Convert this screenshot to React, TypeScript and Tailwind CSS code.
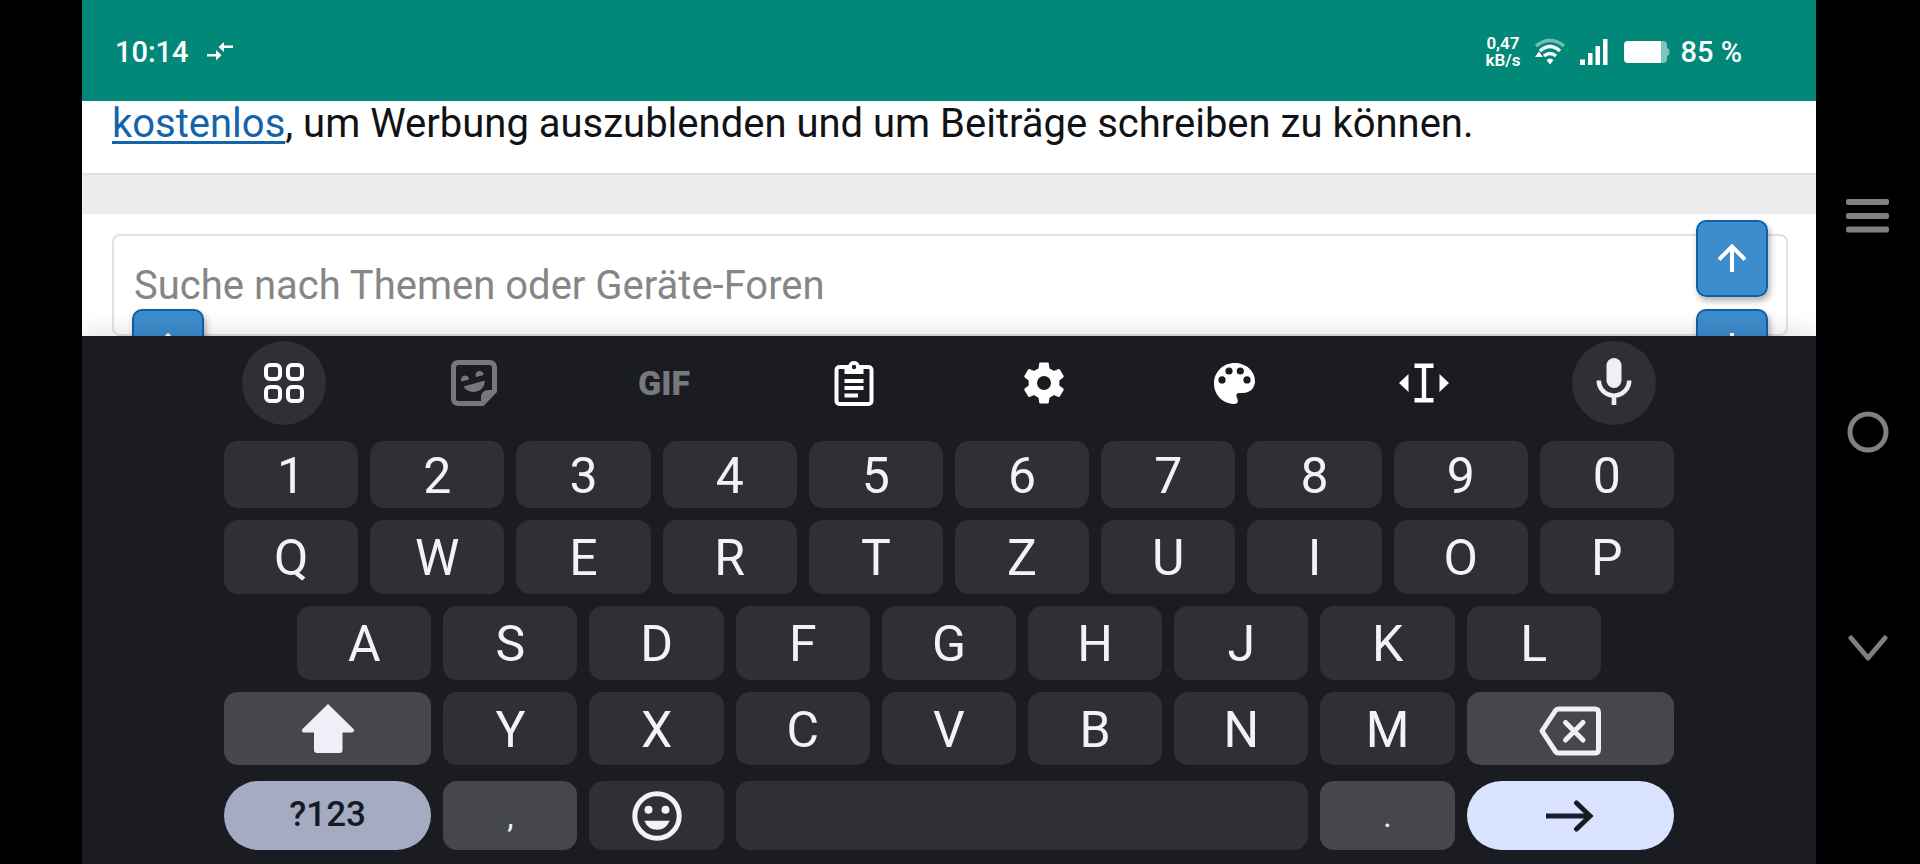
import type { ReactNode } from "react";

const DIGITS = ["1", "2", "3", "4", "5", "6", "7", "8", "9", "0"];
const TOP_ROW = ["Q", "W", "E", "R", "T", "Z", "U", "I", "O", "P"];
const HOME_ROW = ["A", "S", "D", "F", "G", "H", "J", "K", "L"];
const BOTTOM_ROW = ["Y", "X", "C", "V", "B", "N", "M"];

function StatusBar() {
  return (
    <header className="flex shrink-0 items-center justify-between bg-[#018879] pt-8 pr-[74px] pb-[29px] pl-[33px] text-[29px] leading-10 font-medium text-white">
      <div className="flex items-center gap-[18px]">
        <time>10:14</time>
        <svg width="26" height="20" viewBox="0 0 26 20" fill="white" aria-hidden="true">
          <path d="M0 12h9V8l5.500 5.300L9 18.500v-4H0z" />
          <path d="M26 3.500h-9V0l-5.500 5L17 10V6h9z" />
        </svg>
      </div>
      <div className="flex items-center">
        <div className="flex flex-col items-center text-[17px] leading-[17px] font-semibold">
          <span>0,47</span>
          <span>kB/s</span>
        </div>
        <svg className="ml-3.5" width="32" height="28" viewBox="0 0 32 28" fill="none" aria-label="WLAN">
          <path d="M2 8Q16-3 30 8" stroke="white" strokeOpacity=".45" strokeWidth="3.5" />
          <path d="M6 13Q16 4 26 13" stroke="white" strokeWidth="3.5" />
          <path d="M10 18Q16 13 22 18" stroke="white" strokeWidth="3.5" />
          <path d="M12.500 22Q16 19 19.500 22L16 26.500z" fill="white" />
          <path d="M1 19L5 13.500l4 5.500z" fill="white" />
        </svg>
        <svg className="ml-3.5" width="28" height="26" viewBox="0 0 28 26" fill="white" aria-label="Mobilfunk">
          <path d="M0 20.500h5V26H0zM8 14h4.500v12H8zM15.500 7H20v19h-4.500zM23 0h4.500v26H23z" />
        </svg>
        <svg className="ml-4" width="46" height="22" viewBox="0 0 46 22" fill="white" aria-label="Akku">
          <path d="M4 0h33v22H4a4 4 0 0 1-4-4V4a4 4 0 0 1 4-4z" />
          <path d="M37 0h2a4 4 0 0 1 4 4v3q2.500.5 2.500 4t-2.500 4v3a4 4 0 0 1-4 4h-2z" fillOpacity=".5" />
        </svg>
        <span className="ml-2.5">85 %</span>
      </div>
    </header>
  );
}

function ScrollButton({ label, children }: { label: string; children: ReactNode }) {
  return (
    <button
      type="button"
      aria-label={label}
      className="flex h-[77px] w-[72px] items-center justify-center rounded-[10px] border-2 border-[#0b62ab] bg-[#2880c5]/90 pb-0.5 text-white shadow-[2px_4px_6px_rgba(0,0,0,0.3)]"
    >
      <svg width="28" height="28" viewBox="0 0 28 28" fill="none" stroke="currentColor" strokeWidth="4" aria-hidden="true">
        {children}
      </svg>
    </button>
  );
}

function ForumPage() {
  return (
    <main className="relative min-h-0 flex-1 basis-0 overflow-hidden bg-white text-[40px] text-[#111214]">
      <p className="px-[30px] pt-[3px] pb-[29px] leading-10 whitespace-nowrap">
        <a href="#kostenlos" className="text-[#1464ac] underline decoration-3 underline-offset-4">
          kostenlos
        </a>
        , um Werbung auszublenden und um Beiträge schreiben zu können.
      </p>
      <div className="h-[41px] border-t-2 border-[#e0e1e8] bg-[#ececec]" />
      <div className="pt-5 pr-7 pl-[30px]">
        <input
          type="search"
          aria-label="Suche"
          placeholder="Suche nach Themen oder Geräte-Foren"
          className="h-[102px] w-full rounded-lg border-2 border-[#e0e1e8] px-5 placeholder:text-[#868686]"
        />
      </div>
      <div className="absolute top-[119px] right-12 flex flex-col gap-3">
        <ScrollButton label="Nach oben">
          <path d="M14 28V3M1 15.500L14 2.500l13 13" />
        </ScrollButton>
        <ScrollButton label="Nach unten">
          <path d="M14 0v25M1 12.500l13 13 13-13" />
        </ScrollButton>
      </div>
      <div className="absolute top-52 left-[50px]">
        <ScrollButton label="Zurück">
          <path d="M15.500 1l-13 13 13 13M3 14h25" />
        </ScrollButton>
      </div>
    </main>
  );
}

function Tool({ label, round, children }: { label: string; round?: boolean; children: ReactNode }) {
  return (
    <button
      type="button"
      aria-label={label}
      className={
        round
          ? "flex size-21 items-center justify-center rounded-full bg-[#2f3035] text-[#f0eff7]"
          : "flex size-21 items-center justify-center text-white"
      }
    >
      {children}
    </button>
  );
}

function GearIcon() {
  return (
    <svg width="42" height="42" viewBox="-21 -21 42 42" fill="white">
      <circle r="11.200" fill="none" stroke="white" strokeWidth="8.400" />
      {[0, 60, 120, 180, 240, 300].map((angle) => (
        <path
          key={angle}
          transform={`rotate(${angle})`}
          d="M-7.500-12.500l2-2 .7-5q.2-1 1.200-1h7.200q1 0 1.200 1l.7 5 2 2z"
        />
      ))}
    </svg>
  );
}

function PaletteIcon() {
  return (
    <svg width="41" height="41" viewBox="0 0 41 41" fill="white">
      <path
        fillRule="evenodd"
        d="M20.500 0C32 0 41 8 41 18c0 7-5 12-12 12h-3.500q-4 0-3 3.500l1 2.500q1.500 4.500-3 5C9 41 0 32 0 20.500S9 0 20.500 0zM8 13.300a3.600 3.600 0 1 0 0 7.200 3.600 3.600 0 0 0 0-7.200zM15 4.400a3.600 3.600 0 1 0 0 7.200 3.600 3.600 0 0 0 0-7.200zM26.300 4.400a3.600 3.600 0 1 0 0 7.200 3.600 3.600 0 0 0 0-7.200zM33 13.300a3.600 3.600 0 1 0 0 7.200 3.600 3.600 0 0 0 0-7.200z"
      />
    </svg>
  );
}

function Toolbar() {
  return (
    <div className="flex justify-between px-[18px] pt-[5px] pb-4">
      <Tool label="Menü" round>
        <svg width="40" height="40" viewBox="0 0 40 40" fill="none" stroke="white" strokeWidth="4">
          <rect x="2" y="2" width="14" height="14" rx="4" />
          <rect x="24" y="2" width="14" height="14" rx="4" />
          <rect x="2" y="24" width="14" height="14" rx="4" />
          <rect x="24" y="24" width="14" height="14" rx="4" />
        </svg>
      </Tool>
      <Tool label="Sticker">
        <svg width="46" height="46" viewBox="0 0 46 46" fill="#77787c">
          <path
            fillRule="evenodd"
            d="M7 0h32a7 7 0 0 1 7 7v25L32.500 46H7a7 7 0 0 1-7-7V7a7 7 0 0 1 7-7zM7.500 5A2.500 2.500 0 0 0 5 7.500v31A2.500 2.500 0 0 0 7.500 41H30v-3q0-8 8-8h3V7.500A2.500 2.500 0 0 0 38.500 5z"
          />
          <path d="M10.500 21.500a4 4 0 1 1 7.500-2zM25 17a4 4 0 1 1 7.500-2z" />
          <path d="M12.500 26.500L34 20.500Q33 30 25.500 31.500 17 33.500 12.500 26.500z" />
        </svg>
      </Tool>
      <Tool label="GIF">
        <span className="text-[34px] font-black text-[#77787c]">GIF</span>
      </Tool>
      <Tool label="Zwischenablage">
        <svg width="40" height="46" viewBox="0 0 40 46" fill="white">
          <path
            fillRule="evenodd"
            d="M5.500 5h9a5.800 5.800 0 0 1 11 0h9A5 5 0 0 1 39.500 10v31a5 5 0 0 1-5 5h-29a5 5 0 0 1-5-5V10a5 5 0 0 1 5-5zM4.500 9.500V41q0 1 1 1h29q1 0 1-1V9.500q0-.5-1-.5h-5v5h-19V9h-5q-1 0-1 .5zM20 4.800a2.200 2.200 0 1 0 0 4.400 2.200 2.200 0 0 0 0-4.400z"
          />
          <path d="M10.500 19h19v4h-19zM10.500 26h19v4h-19zM10.500 33.500h13.500v4h-13.500z" />
        </svg>
      </Tool>
      <Tool label="Einstellungen">
        <GearIcon />
      </Tool>
      <Tool label="Design">
        <PaletteIcon />
      </Tool>
      <Tool label="Textbearbeitung">
        <svg width="50" height="40" viewBox="0 0 50 40" fill="white">
          <path d="M15.500.5h19v4.500h-7.300v30h7.300v4.500h-19V35h7.300V5h-7.300zM0 20l9.500-9v18zM50 20l-9.500-9v18z" />
        </svg>
      </Tool>
      <Tool label="Spracheingabe" round>
        <svg width="36" height="50" viewBox="0 0 36 50" fill="none">
          <rect x="10.500" y="0" width="15" height="30" rx="7.500" fill="currentColor" />
          <path d="M2.800 22.500a15.200 15.200 0 0 0 30.400 0M18 38v9" stroke="currentColor" strokeWidth="4.600" />
        </svg>
      </Tool>
    </div>
  );
}

const KEY = "flex items-center justify-center rounded-[14px] col-span-2";
const LETTER = `${KEY} bg-[#2f3035] pt-0.5 text-[50px] leading-none text-[#f3f2fa]`;

function Letters({ keys }: { keys: string[] }) {
  return keys.map((k) => (
    <button key={k} type="button" className={LETTER}>
      {k}
    </button>
  ));
}

function Keyboard() {
  return (
    <section
      aria-label="Tastatur"
      className="relative shrink-0 bg-[#1b1c21] px-[142px] pb-3.5 shadow-[0_-4px_24px_rgba(0,0,0,0.12)]"
    >
      <Toolbar />
      <div className="grid h-[67px] grid-cols-20 gap-x-3">
        <Letters keys={DIGITS} />
      </div>
      <div className="mt-3 grid h-[74px] grid-cols-20 gap-x-3">
        <Letters keys={TOP_ROW} />
      </div>
      <div className="mt-3 grid h-[74px] grid-cols-20 gap-x-3">
        <span />
        <Letters keys={HOME_ROW} />
      </div>
      <div className="mt-3 grid h-[73px] grid-cols-20 gap-x-3">
        <button
          type="button"
          aria-label="Umschalttaste"
          className="col-span-3 flex items-center justify-center rounded-[14px] bg-[#46474c]"
        >
          <svg width="52" height="49" viewBox="0 0 52 49" fill="#f0eff7">
            <path d="M26 0l25 24.500q1.500 1.500 1 2.500t-2 1.500h-9.500V46q0 3-3 3H15q-3 0-3-3V28.500H2Q.5 28.500 0 27.300T1 24.500z" />
          </svg>
        </button>
        <Letters keys={BOTTOM_ROW} />
        <button
          type="button"
          aria-label="Löschen"
          className="col-span-3 flex items-center justify-center rounded-[14px] bg-[#46474c] pt-1"
        >
          <svg width="62" height="50" viewBox="0 0 62 50" fill="none" stroke="#f0eff7" strokeWidth="5" strokeLinejoin="round">
            <path d="M19.500 3H56q3.500 0 3.500 3.500v37Q59.500 47 56 47H19.500q-2 0-3-1.500L3 25 16.500 4.500q1-1.500 3-1.500z" />
            <path d="M26.500 16.500l17.500 17.500M44 16.500L26.500 34" strokeLinecap="round" />
          </svg>
        </button>
      </div>
      <div className="mt-4 grid h-[69px] grid-cols-20 gap-x-3">
        <button
          type="button"
          className="col-span-3 flex items-center justify-center rounded-full bg-[#a5abc2] text-[35px] font-medium text-[#171a25]"
        >
          ?123
        </button>
        <button type="button" className={`${KEY} bg-[#46474c] text-[32px] text-[#f3f2fa]`}>
          ,
        </button>
        <button type="button" aria-label="Emoji" className={`${KEY} bg-[#2f3035]`}>
          <svg width="50" height="50" viewBox="0 0 50 50" fill="#f3f2fa">
            <circle cx="25" cy="25" r="22.200" fill="none" stroke="#f3f2fa" strokeWidth="5" />
            <circle cx="16.500" cy="18.700" r="4" />
            <circle cx="33.500" cy="18.700" r="4" />
            <path d="M12.300 29.700h25.400Q34 38.700 25 38.700t-12.700-9z" />
          </svg>
        </button>
        <button type="button" aria-label="Leertaste" className="col-span-8 rounded-[14px] bg-[#2f3035]" />
        <button type="button" className={`${KEY} bg-[#46474c] text-[32px] text-[#f3f2fa]`}>
          .
        </button>
        <button
          type="button"
          aria-label="Eingabe"
          className="col-span-3 flex items-center justify-center rounded-full bg-[#d9e2ff]"
        >
          <svg width="48" height="32" viewBox="0 0 48 32" fill="none" stroke="#1a1c27" strokeWidth="5">
            <path d="M0 16h44" />
            <path d="M30.500 3L44 16 30.500 29" strokeLinecap="round" />
          </svg>
        </button>
      </div>
    </section>
  );
}

function NavRail() {
  return (
    <nav className="flex w-[104px] shrink-0 flex-col py-[108px] text-[#808080]">
      <button type="button" aria-label="Letzte Apps" className="flex flex-1 items-center justify-center">
        <svg width="44" height="34" viewBox="0 0 44 34" fill="currentColor">
          <rect x="0" y="0" width="43" height="6" rx="2" />
          <rect x="0" y="14" width="43" height="6" rx="2" />
          <rect x="0" y="27.500" width="43" height="6" rx="2" />
        </svg>
      </button>
      <button type="button" aria-label="Startseite" className="flex flex-1 items-center justify-center">
        <svg width="42" height="42" viewBox="0 0 42 42" fill="none" stroke="currentColor" strokeWidth="5">
          <circle cx="21" cy="21" r="18" />
        </svg>
      </button>
      <button type="button" aria-label="Tastatur schließen" className="flex flex-1 items-center justify-center">
        <svg width="40" height="26" viewBox="0 0 40 26" fill="none" stroke="currentColor" strokeWidth="5" strokeLinecap="round" strokeLinejoin="round">
          <path d="M3 3l17 20L37 3" />
        </svg>
      </button>
    </nav>
  );
}

export default function App() {
  return (
    <div className="flex h-screen bg-black pl-[82px] font-[Roboto,sans-serif]">
      <div className="flex min-w-0 flex-1 flex-col overflow-hidden">
        <StatusBar />
        <ForumPage />
        <Keyboard />
      </div>
      <NavRail />
    </div>
  );
}
